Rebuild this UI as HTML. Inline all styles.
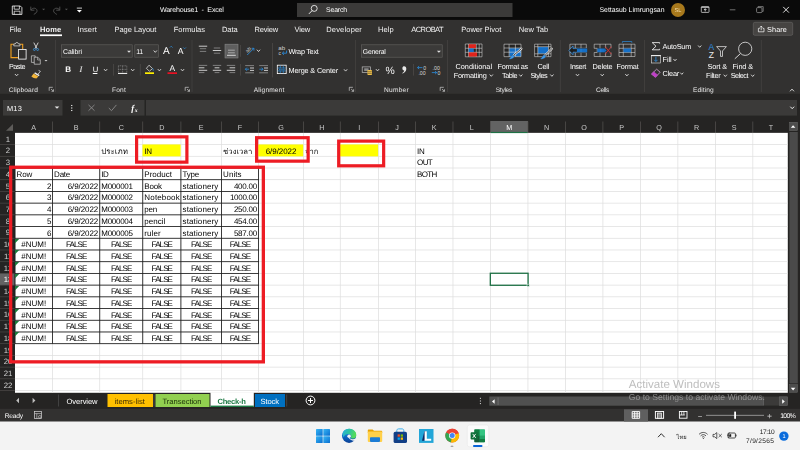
<!DOCTYPE html>
<html lang="th"><head><meta charset="utf-8"><title>Warehouse1 - Excel</title>
<style>
html,body{margin:0;padding:0;}
body{width:800px;height:450px;overflow:hidden;position:relative;background:#f3f3f3;font-family:"Liberation Sans", "DejaVu Sans", sans-serif;}
.b{position:absolute;display:block;}
.g{position:absolute;left:0;top:0;width:800px;height:450px;will-change:transform;}
.t{position:absolute;white-space:pre;line-height:1;margin:0;padding:0;text-rendering:geometricPrecision;}
</style></head><body>
<svg class="b" style="left:0;top:0" width="800" height="450" viewBox="0 0 800 450">
<rect x="0.00" y="0.00" width="800.00" height="432.00" fill="#252423"/>
<rect x="0.00" y="0.00" width="800.00" height="93.80" fill="#323130"/>
<rect x="0.00" y="0.00" width="800.00" height="19.90" fill="#0a0a0a"/>
<rect x="15.00" y="132.85" width="772.80" height="259.95" fill="#ffffff"/>
<rect x="0.00" y="408.80" width="800.00" height="23.20" fill="#323130"/>
<rect x="0.00" y="421.50" width="800.00" height="28.50" fill="#f3f3f3"/>
<rect x="297.00" y="3.00" width="215.50" height="14.00" fill="#3b3a39"/>
<rect x="671.00" y="3.00" width="14.00" height="14.00" fill="#a8791c" rx="7"/>
<rect x="40.00" y="34.40" width="22.00" height="1.70" fill="#ffffff"/>
<rect x="753.30" y="22.30" width="39.40" height="13.00" fill="#464442" stroke="#6a6866" stroke-width="0.6" rx="1.5"/>
<rect x="55.20" y="40.00" width="0.60" height="52.00" fill="#4a4846"/>
<rect x="191.70" y="40.00" width="0.60" height="52.00" fill="#4a4846"/>
<rect x="355.30" y="40.00" width="0.60" height="52.00" fill="#4a4846"/>
<rect x="447.20" y="40.00" width="0.60" height="52.00" fill="#4a4846"/>
<rect x="559.90" y="40.00" width="0.60" height="52.00" fill="#4a4846"/>
<rect x="644.10" y="40.00" width="0.60" height="52.00" fill="#4a4846"/>
<rect x="760.90" y="40.00" width="0.60" height="52.00" fill="#4a4846"/>
<rect x="113.30" y="64.00" width="0.60" height="11.60" fill="#55524f"/>
<rect x="139.90" y="64.00" width="0.60" height="11.60" fill="#55524f"/>
<rect x="240.30" y="64.00" width="0.60" height="11.60" fill="#55524f"/>
<rect x="413.20" y="64.00" width="0.60" height="11.60" fill="#55524f"/>
<rect x="240.30" y="45.00" width="0.60" height="11.80" fill="#55524f"/>
<rect x="272.00" y="43.00" width="0.60" height="34.40" fill="#55524f"/>
<rect x="61.30" y="44.80" width="70.90" height="12.40" fill="#3b3a39" stroke="#656361" stroke-width="0.6"/>
<rect x="134.80" y="44.80" width="23.70" height="12.40" fill="#3b3a39" stroke="#656361" stroke-width="0.6"/>
<rect x="145.00" y="72.30" width="9.00" height="1.70" fill="#ffee00"/>
<rect x="167.50" y="72.30" width="9.50" height="1.70" fill="#e81123"/>
<rect x="225.00" y="44.50" width="13.00" height="13.50" fill="#5e5e5e"/>
<rect x="361.30" y="44.80" width="80.90" height="12.40" fill="#3b3a39" stroke="#656361" stroke-width="0.6"/>
<rect x="3.00" y="100.00" width="59.50" height="15.60" fill="#3b3a39"/>
<rect x="80.50" y="100.00" width="64.00" height="15.60" fill="#3b3a39"/>
<rect x="146.00" y="100.00" width="651.00" height="15.60" fill="#3b3a39"/>
<rect x="490.30" y="121.00" width="37.70" height="11.40" fill="#636363"/>
<rect x="490.30" y="131.90" width="37.70" height="1.20" fill="#1e7145"/>
<rect x="0.00" y="273.41" width="14.60" height="11.71" fill="#636363"/>
<rect x="52.15" y="121.50" width="0.70" height="11.35" fill="#565452"/>
<rect x="99.40" y="121.50" width="0.70" height="11.35" fill="#565452"/>
<rect x="142.40" y="121.50" width="0.70" height="11.35" fill="#565452"/>
<rect x="180.55" y="121.50" width="0.70" height="11.35" fill="#565452"/>
<rect x="221.15" y="121.50" width="0.70" height="11.35" fill="#565452"/>
<rect x="258.15" y="121.50" width="0.70" height="11.35" fill="#565452"/>
<rect x="303.15" y="121.50" width="0.70" height="11.35" fill="#565452"/>
<rect x="339.90" y="121.50" width="0.70" height="11.35" fill="#565452"/>
<rect x="378.05" y="121.50" width="0.70" height="11.35" fill="#565452"/>
<rect x="415.15" y="121.50" width="0.70" height="11.35" fill="#565452"/>
<rect x="452.63" y="121.50" width="0.70" height="11.35" fill="#565452"/>
<rect x="490.11" y="121.50" width="0.70" height="11.35" fill="#565452"/>
<rect x="527.60" y="121.50" width="0.70" height="11.35" fill="#565452"/>
<rect x="565.08" y="121.50" width="0.70" height="11.35" fill="#565452"/>
<rect x="602.56" y="121.50" width="0.70" height="11.35" fill="#565452"/>
<rect x="640.04" y="121.50" width="0.70" height="11.35" fill="#565452"/>
<rect x="677.52" y="121.50" width="0.70" height="11.35" fill="#565452"/>
<rect x="715.00" y="121.50" width="0.70" height="11.35" fill="#565452"/>
<rect x="752.49" y="121.50" width="0.70" height="11.35" fill="#565452"/>
<rect x="52.14" y="132.85" width="0.72" height="259.95" fill="#dedede"/>
<rect x="99.39" y="132.85" width="0.72" height="259.95" fill="#dedede"/>
<rect x="142.39" y="132.85" width="0.72" height="259.95" fill="#dedede"/>
<rect x="180.54" y="132.85" width="0.72" height="259.95" fill="#dedede"/>
<rect x="221.14" y="132.85" width="0.72" height="259.95" fill="#dedede"/>
<rect x="258.14" y="132.85" width="0.72" height="259.95" fill="#dedede"/>
<rect x="303.14" y="132.85" width="0.72" height="259.95" fill="#dedede"/>
<rect x="339.89" y="132.85" width="0.72" height="259.95" fill="#dedede"/>
<rect x="378.04" y="132.85" width="0.72" height="259.95" fill="#dedede"/>
<rect x="415.14" y="132.85" width="0.72" height="259.95" fill="#dedede"/>
<rect x="452.62" y="132.85" width="0.72" height="259.95" fill="#dedede"/>
<rect x="490.10" y="132.85" width="0.72" height="259.95" fill="#dedede"/>
<rect x="527.59" y="132.85" width="0.72" height="259.95" fill="#dedede"/>
<rect x="565.07" y="132.85" width="0.72" height="259.95" fill="#dedede"/>
<rect x="602.55" y="132.85" width="0.72" height="259.95" fill="#dedede"/>
<rect x="640.03" y="132.85" width="0.72" height="259.95" fill="#dedede"/>
<rect x="677.51" y="132.85" width="0.72" height="259.95" fill="#dedede"/>
<rect x="714.99" y="132.85" width="0.72" height="259.95" fill="#dedede"/>
<rect x="752.48" y="132.85" width="0.72" height="259.95" fill="#dedede"/>
<rect x="15.00" y="144.20" width="772.80" height="0.72" fill="#dedede"/>
<rect x="0.00" y="144.21" width="15.00" height="0.70" fill="#4c4a48"/>
<rect x="15.00" y="155.92" width="772.80" height="0.72" fill="#dedede"/>
<rect x="0.00" y="155.93" width="15.00" height="0.70" fill="#4c4a48"/>
<rect x="15.00" y="167.63" width="772.80" height="0.72" fill="#dedede"/>
<rect x="0.00" y="167.64" width="15.00" height="0.70" fill="#4c4a48"/>
<rect x="15.00" y="179.34" width="772.80" height="0.72" fill="#dedede"/>
<rect x="0.00" y="179.35" width="15.00" height="0.70" fill="#4c4a48"/>
<rect x="15.00" y="191.06" width="772.80" height="0.72" fill="#dedede"/>
<rect x="0.00" y="191.07" width="15.00" height="0.70" fill="#4c4a48"/>
<rect x="15.00" y="202.77" width="772.80" height="0.72" fill="#dedede"/>
<rect x="0.00" y="202.78" width="15.00" height="0.70" fill="#4c4a48"/>
<rect x="15.00" y="214.48" width="772.80" height="0.72" fill="#dedede"/>
<rect x="0.00" y="214.49" width="15.00" height="0.70" fill="#4c4a48"/>
<rect x="15.00" y="226.19" width="772.80" height="0.72" fill="#dedede"/>
<rect x="0.00" y="226.20" width="15.00" height="0.70" fill="#4c4a48"/>
<rect x="15.00" y="237.91" width="772.80" height="0.72" fill="#dedede"/>
<rect x="0.00" y="237.92" width="15.00" height="0.70" fill="#4c4a48"/>
<rect x="15.00" y="249.62" width="772.80" height="0.72" fill="#dedede"/>
<rect x="0.00" y="249.63" width="15.00" height="0.70" fill="#4c4a48"/>
<rect x="15.00" y="261.33" width="772.80" height="0.72" fill="#dedede"/>
<rect x="0.00" y="261.34" width="15.00" height="0.70" fill="#4c4a48"/>
<rect x="15.00" y="273.05" width="772.80" height="0.72" fill="#dedede"/>
<rect x="0.00" y="273.06" width="15.00" height="0.70" fill="#4c4a48"/>
<rect x="15.00" y="284.76" width="772.80" height="0.72" fill="#dedede"/>
<rect x="0.00" y="284.77" width="15.00" height="0.70" fill="#4c4a48"/>
<rect x="15.00" y="296.47" width="772.80" height="0.72" fill="#dedede"/>
<rect x="0.00" y="296.48" width="15.00" height="0.70" fill="#4c4a48"/>
<rect x="15.00" y="308.19" width="772.80" height="0.72" fill="#dedede"/>
<rect x="0.00" y="308.20" width="15.00" height="0.70" fill="#4c4a48"/>
<rect x="15.00" y="319.90" width="772.80" height="0.72" fill="#dedede"/>
<rect x="0.00" y="319.91" width="15.00" height="0.70" fill="#4c4a48"/>
<rect x="15.00" y="331.61" width="772.80" height="0.72" fill="#dedede"/>
<rect x="0.00" y="331.62" width="15.00" height="0.70" fill="#4c4a48"/>
<rect x="15.00" y="343.32" width="772.80" height="0.72" fill="#dedede"/>
<rect x="0.00" y="343.33" width="15.00" height="0.70" fill="#4c4a48"/>
<rect x="15.00" y="355.04" width="772.80" height="0.72" fill="#dedede"/>
<rect x="0.00" y="355.05" width="15.00" height="0.70" fill="#4c4a48"/>
<rect x="15.00" y="366.75" width="772.80" height="0.72" fill="#dedede"/>
<rect x="0.00" y="366.76" width="15.00" height="0.70" fill="#4c4a48"/>
<rect x="15.00" y="378.46" width="772.80" height="0.72" fill="#dedede"/>
<rect x="0.00" y="378.47" width="15.00" height="0.70" fill="#4c4a48"/>
<rect x="15.00" y="390.18" width="772.80" height="0.72" fill="#dedede"/>
<rect x="0.00" y="390.19" width="15.00" height="0.70" fill="#4c4a48"/>
<rect x="142.45" y="144.46" width="38.15" height="11.91" fill="#ffff00"/>
<rect x="258.20" y="144.46" width="45.00" height="11.91" fill="#ffff00"/>
<rect x="339.95" y="144.46" width="38.15" height="11.91" fill="#ffff00"/>
<rect x="15.00" y="167.57" width="243.90" height="0.84" fill="#1c1c1c"/>
<rect x="15.00" y="179.28" width="243.90" height="0.84" fill="#1c1c1c"/>
<rect x="15.00" y="191.00" width="243.90" height="0.84" fill="#1c1c1c"/>
<rect x="15.00" y="202.71" width="243.90" height="0.84" fill="#1c1c1c"/>
<rect x="15.00" y="214.42" width="243.90" height="0.84" fill="#1c1c1c"/>
<rect x="15.00" y="226.13" width="243.90" height="0.84" fill="#1c1c1c"/>
<rect x="15.00" y="237.85" width="243.90" height="0.84" fill="#1c1c1c"/>
<rect x="15.00" y="249.56" width="243.90" height="0.84" fill="#1c1c1c"/>
<rect x="15.00" y="261.27" width="243.90" height="0.84" fill="#1c1c1c"/>
<rect x="15.00" y="272.99" width="243.90" height="0.84" fill="#1c1c1c"/>
<rect x="15.00" y="284.70" width="243.90" height="0.84" fill="#1c1c1c"/>
<rect x="15.00" y="296.41" width="243.90" height="0.84" fill="#1c1c1c"/>
<rect x="15.00" y="308.13" width="243.90" height="0.84" fill="#1c1c1c"/>
<rect x="15.00" y="319.84" width="243.90" height="0.84" fill="#1c1c1c"/>
<rect x="15.00" y="331.55" width="243.90" height="0.84" fill="#1c1c1c"/>
<rect x="15.00" y="343.26" width="243.90" height="0.84" fill="#1c1c1c"/>
<rect x="52.08" y="167.99" width="0.84" height="175.70" fill="#1c1c1c"/>
<rect x="99.33" y="167.99" width="0.84" height="175.70" fill="#1c1c1c"/>
<rect x="142.33" y="167.99" width="0.84" height="175.70" fill="#1c1c1c"/>
<rect x="180.48" y="167.99" width="0.84" height="175.70" fill="#1c1c1c"/>
<rect x="221.08" y="167.99" width="0.84" height="175.70" fill="#1c1c1c"/>
<rect x="258.08" y="167.99" width="0.84" height="175.70" fill="#1c1c1c"/>
<rect x="14.70" y="167.99" width="0.80" height="175.70" fill="#1c1c1c"/>
<rect x="490.31" y="273.26" width="37.78" height="12.01" fill="none" stroke="#1d7044" stroke-width="1.3"/>
<rect x="527.00" y="284.17" width="2.30" height="2.30" fill="#1d7044" stroke="#fff" stroke-width="0.5"/>
<rect x="789.65" y="122.25" width="7.90" height="8.30" fill="#4d4d4d" stroke="#686868" stroke-width="0.5"/>
<rect x="789.40" y="132.00" width="8.40" height="251.40" fill="#4a4a4a"/>
<rect x="789.65" y="384.65" width="7.90" height="7.60" fill="#4d4d4d" stroke="#686868" stroke-width="0.5"/>
<rect x="58.00" y="394.50" width="0.60" height="12.00" fill="#555"/>
<rect x="107.50" y="394.00" width="45.50" height="13.00" fill="#ffc000"/>
<rect x="155.50" y="394.00" width="54.00" height="13.00" fill="#92d050"/>
<rect x="210.50" y="392.20" width="43.30" height="14.80" fill="#ffffff"/>
<rect x="210.50" y="405.60" width="43.30" height="1.40" fill="#1e7a45"/>
<rect x="255.00" y="394.00" width="30.00" height="13.00" fill="#0070c0"/>
<rect x="153.60" y="394.50" width="0.80" height="12.00" fill="#555"/>
<rect x="286.50" y="394.50" width="0.60" height="12.00" fill="#555"/>
<rect x="479.90" y="397.80" width="1.00" height="1.00" fill="#e8e8e8"/>
<rect x="479.90" y="400.50" width="1.00" height="1.00" fill="#e8e8e8"/>
<rect x="479.90" y="403.10" width="1.00" height="1.00" fill="#e8e8e8"/>
<rect x="489.40" y="396.60" width="298.40" height="9.00" fill="#3b3a39"/>
<rect x="489.40" y="396.60" width="274.60" height="9.00" fill="#505050"/>
<rect x="497.70" y="397.40" width="0.70" height="7.60" fill="#7c7c7c"/>
<rect x="763.40" y="397.20" width="0.60" height="8.00" fill="#666"/>
<rect x="779.45" y="396.85" width="8.10" height="8.50" fill="#505050" stroke="#6a6a6a" stroke-width="0.5"/>
<rect x="624.00" y="409.30" width="24.00" height="12.20" fill="#5f5f5f"/>
<rect x="706.00" y="414.90" width="58.00" height="0.60" fill="#d0d0d0"/>
<rect x="734.20" y="411.60" width="1.80" height="7.20" fill="#ffffff"/>
<rect x="467.25" y="425.05" width="21.50" height="21.70" fill="#fbfbfb" stroke="#e4e4e4" stroke-width="0.5" rx="2"/>
<rect x="473.00" y="445.00" width="9.50" height="1.90" fill="#0a64d8" rx="0.9"/>
<rect x="450.60" y="445.80" width="2.80" height="1.00" fill="#8a8a8a" rx="0.5"/>
<rect x="779.20" y="431.40" width="9.40" height="9.40" fill="#0a6cdc" rx="4.7"/>
</svg>
<svg class="b" style="left:3px;top:122px" width="12" height="10" viewBox="0 0 12 10"><path d="M10 2V8.8H3Z" fill="#5e5c5a"/></svg>
<svg class="b" style="left:15.30px;top:238.67px" width="5" height="5" viewBox="0 0 5 5"><path d="M0 0H4.2L0 4.2Z" fill="#1e7a3c"/></svg>
<svg class="b" style="left:15.30px;top:250.38px" width="5" height="5" viewBox="0 0 5 5"><path d="M0 0H4.2L0 4.2Z" fill="#1e7a3c"/></svg>
<svg class="b" style="left:15.30px;top:262.09px" width="5" height="5" viewBox="0 0 5 5"><path d="M0 0H4.2L0 4.2Z" fill="#1e7a3c"/></svg>
<svg class="b" style="left:15.30px;top:273.81px" width="5" height="5" viewBox="0 0 5 5"><path d="M0 0H4.2L0 4.2Z" fill="#1e7a3c"/></svg>
<svg class="b" style="left:15.30px;top:285.52px" width="5" height="5" viewBox="0 0 5 5"><path d="M0 0H4.2L0 4.2Z" fill="#1e7a3c"/></svg>
<svg class="b" style="left:15.30px;top:297.23px" width="5" height="5" viewBox="0 0 5 5"><path d="M0 0H4.2L0 4.2Z" fill="#1e7a3c"/></svg>
<svg class="b" style="left:15.30px;top:308.95px" width="5" height="5" viewBox="0 0 5 5"><path d="M0 0H4.2L0 4.2Z" fill="#1e7a3c"/></svg>
<svg class="b" style="left:15.30px;top:320.66px" width="5" height="5" viewBox="0 0 5 5"><path d="M0 0H4.2L0 4.2Z" fill="#1e7a3c"/></svg>
<svg class="b" style="left:15.30px;top:332.37px" width="5" height="5" viewBox="0 0 5 5"><path d="M0 0H4.2L0 4.2Z" fill="#1e7a3c"/></svg>
<svg class="b" style="left:789.4px;top:122px" width="8.2" height="8.8" viewBox="0 0 8.2 8.8"><path d="M1.8 5.8L4.1 3.2L6.4 5.8Z" fill="#fff"/></svg>
<svg class="b" style="left:789.4px;top:384.5px" width="8.2" height="8" viewBox="0 0 8.2 8"><path d="M1.8 2.8L4.1 5.4L6.4 2.8Z" fill="#fff"/></svg>
<svg class="b" style="left:304.9px;top:395.2px" width="11" height="11" viewBox="0 0 11 11"><circle cx="5.5" cy="5.5" r="4.4" fill="none" stroke="#fff" stroke-width="1"/><path d="M5.5 3V8M3 5.5H8" stroke="#fff" stroke-width="1.05"/></svg>
<svg class="b" style="left:14px;top:397px" width="24" height="7" viewBox="0 0 24 7"><path d="M5 0.8V6.2L2.2 3.5Z M18.6 0.8V6.2L21.4 3.5Z" fill="#bdbdbd"/></svg>
<svg class="b" style="left:489.4px;top:396.6px" width="8.6" height="9" viewBox="0 0 8.6 9"><path d="M5.6 2.2V6.8L3 4.5Z" fill="#fff"/></svg>
<svg class="b" style="left:779.2px;top:396.6px" width="8.6" height="9" viewBox="0 0 8.6 9"><path d="M3.2 2.2V6.8L5.8 4.5Z" fill="#fff"/></svg>
<svg class="b" style="left:0;top:0" width="800" height="450" viewBox="0 0 800 450"><path d="M12.3 6H20.3L21.9 7.6V14.4H12.3Z" fill="none" stroke="#ffffff" stroke-width="0.8" /><path d="M14.2 6V9.2H19.4V6" fill="none" stroke="#ffffff" stroke-width="0.7" /><path d="M14.2 14.4V11.2H20V14.4" fill="none" stroke="#ffffff" stroke-width="0.7" /><path d="M30.8 6.6V10.2H34.4M30.9 10.1C32.5 7.4 36.6 7.6 37 10.6C37.2 12.4 35.5 13.4 33.8 14.4" fill="none" stroke="#555555" stroke-width="0.9" /><path d="M42.10 8.75H45.10L43.60 10.25Z" fill="#555555" /><path d="M59.8 6.6V10.2H56.2M59.7 10.1C58.1 7.4 54 7.6 53.6 10.6C53.4 12.4 55.1 13.4 56.8 14.4" fill="none" stroke="#555555" stroke-width="0.9" /><path d="M64.90 8.75H67.90L66.40 10.25Z" fill="#555555" /><path d="M76.8 8.1H82" fill="none" stroke="#ffffff" stroke-width="0.8" /><path d="M76.9 10H81.9L79.4 12.4Z" fill="#ffffff" /><circle cx="314.20" cy="8.40" r="3.00" fill="none" stroke="#ffffff" stroke-width="0.8"/><path d="M312.1 10.6L308.9 13.9" fill="none" stroke="#ffffff" stroke-width="0.9" /><rect x="701.30" y="6.60" width="7.70" height="5.80" fill="none" stroke="#dcdcdc" stroke-width="0.75" rx="0.6"/><path d="M701.3 7.4H709" fill="none" stroke="#dcdcdc" stroke-width="0.8" /><path d="M705.2 11.4V8.8M703.9 10L705.2 8.7L706.5 10" fill="none" stroke="#ffffff" stroke-width="0.75" /><path d="M729.8 9.8H735.4" fill="none" stroke="#8a8a8a" stroke-width="0.8" /><rect x="756.60" y="7.60" width="5.40" height="5.00" fill="none" stroke="#9a9a9a" stroke-width="0.75" rx="1"/><path d="M758 7.4V6.6H763.2V11.4H762.2" fill="none" stroke="#9a9a9a" stroke-width="0.7" /><path d="M783.2 6.9L788.9 12.6M788.9 6.9L783.2 12.6" fill="none" stroke="#ffffff" stroke-width="0.85" /><path d="M759.8 28.4H758.4V31.8H764V28.4H762.8" fill="none" stroke="#ffffff" stroke-width="0.7" /><path d="M761.2 30.2V26.2M759.9 27.5L761.2 26.1L762.5 27.5" fill="none" stroke="#ffffff" stroke-width="0.7" /><path d="M13.6 44.2H11V57.6H18.4" fill="none" stroke="#f0a020" stroke-width="1.1" /><path d="M20.2 44.2H22.7V49" fill="none" stroke="#f0a020" stroke-width="1.1" /><path d="M13.8 45.9V43.9H15.3C15.5 42 18.3 42 18.5 43.9H20V45.9Z" fill="none" stroke="#e8e8e8" stroke-width="0.7" /><rect x="18.60" y="49.40" width="7.50" height="9.70" fill="#323130" stroke="#ffffff" stroke-width="0.8"/><path d="M14.90 74.00L16.60 75.80L18.30 74.00" fill="none" stroke="#e0e0e0" stroke-width="0.9" /><path d="M33.8 42.6L36.9 48.6M38.2 42.6L35.1 48.6" fill="none" stroke="#ffffff" stroke-width="0.75" /><circle cx="34.40" cy="49.50" r="1.00" fill="none" stroke="#3a96e0" stroke-width="0.8"/><circle cx="37.60" cy="49.50" r="1.00" fill="none" stroke="#3a96e0" stroke-width="0.8"/><path d="M31.4 55.8H35.2V62.4H31.4Z" fill="none" stroke="#d0d0d0" stroke-width="0.7" /><path d="M34.2 57.2H37.8L40.3 59.8V64.2H34.2Z" fill="#323130" stroke="#d0d0d0" stroke-width="0.7" /><path d="M37.6 57.4V60H40.1" fill="none" stroke="#d0d0d0" stroke-width="0.6" /><path d="M44.50 60.10H47.50L46.00 61.50Z" fill="#d0d0d0" /><path d="M38.6 70.4L40.4 71.3L38 74.2" fill="none" stroke="#d8d8d8" stroke-width="0.8" /><path d="M35 72.2L39.6 75L38.8 76.2L34.2 73.4Z" fill="#e8e8e8" /><path d="M33.6 73.6L38.4 76.6L36.4 78.4C34.6 78.2 32.6 77.6 31.4 76.4Z" fill="#f2b53a" /><path d="M49.20 90.80V87.30H52.80" fill="none" stroke="#cfcfcf" stroke-width="0.7" /><path d="M51.00 89.00L53.40 91.20M53.50 89.30V91.30H51.50" fill="none" stroke="#cfcfcf" stroke-width="0.7" /><path d="M127.10 50.75H130.90L129.00 52.65Z" fill="#e0e0e0" /><path d="M153.70 50.50L155.30 52.30L156.90 50.50" fill="none" stroke="#e0e0e0" stroke-width="0.9" /><path d="M169.8 47.6L171.2 46.2L172.6 47.6" fill="none" stroke="#2b8fe0" stroke-width="0.7" /><path d="M183.2 47.4L184.6 48.8L186 47.4" fill="none" stroke="#2b8fe0" stroke-width="0.7" /><path d="M104.00 69.10L105.60 70.90L107.20 69.10" fill="none" stroke="#e0e0e0" stroke-width="0.9" /><path d="M118.4 65.8H126.8M118.4 69.4H126.8M118.4 65.8V73M126.8 65.8V73M122.6 65.8V73" fill="none" stroke="#9a9a9a" stroke-width="0.6" stroke-dasharray="1 0.7"/><path d="M118 73.4H127.2" fill="none" stroke="#ffffff" stroke-width="1" /><path d="M131.10 69.10L132.70 70.90L134.30 69.10" fill="none" stroke="#e0e0e0" stroke-width="0.9" /><path d="M149 65.2L152.6 68.6L149.4 71.2L146.4 68.4Z" fill="none" stroke="#e0e0e0" stroke-width="0.75" /><path d="M152.6 68.4C153.6 69.6 153.6 70.4 152.9 70.9" fill="none" stroke="#2b8fe0" stroke-width="0.8" /><path d="M157.80 69.10L159.40 70.90L161.00 69.10" fill="none" stroke="#e0e0e0" stroke-width="0.9" /><path d="M180.90 69.10L182.50 70.90L184.10 69.10" fill="none" stroke="#e0e0e0" stroke-width="0.9" /><path d="M185.20 90.80V87.30H188.80" fill="none" stroke="#cfcfcf" stroke-width="0.7" /><path d="M187.00 89.00L189.40 91.20M189.50 89.30V91.30H187.50" fill="none" stroke="#cfcfcf" stroke-width="0.7" /><path d="M198.80 46.20H207.20" fill="none" stroke="#ffffff" stroke-width="0.75" /><path d="M199.80 48.70H206.20" fill="none" stroke="#9a9a9a" stroke-width="0.75" /><path d="M199.80 51.40H206.20" fill="none" stroke="#9a9a9a" stroke-width="0.75" /><path d="M213.80 48.00H220.20" fill="none" stroke="#9a9a9a" stroke-width="0.75" /><path d="M212.80 50.50H221.20" fill="none" stroke="#ffffff" stroke-width="0.75" /><path d="M213.80 53.20H220.20" fill="none" stroke="#9a9a9a" stroke-width="0.75" /><rect x="225.00" y="44.20" width="13.00" height="13.80" fill="#5e5e5e" stroke="#858585" stroke-width="0.6"/><path d="M228.00 50.20H234.80" fill="none" stroke="#c0c0c0" stroke-width="0.75" /><path d="M228.00 52.80H234.80" fill="none" stroke="#c0c0c0" stroke-width="0.75" /><path d="M227.00 55.30H235.80" fill="none" stroke="#ffffff" stroke-width="0.75" /><text x="246.2" y="52" font-size="5.2" fill="#cfcfcf" font-family="Liberation Sans, sans-serif" transform="rotate(-45 248 51)">ab</text><path d="M247.2 55L253.8 48.4M253.9 50.6V48.3H251.6" fill="none" stroke="#2b8fe0" stroke-width="0.85" /><path d="M256.90 49.70L258.50 51.50L260.10 49.70" fill="none" stroke="#e0e0e0" stroke-width="0.9" /><path d="M198.80 65.40H207.20" fill="none" stroke="#9a9a9a" stroke-width="0.75" /><path d="M198.80 67.80H204.40" fill="none" stroke="#ffffff" stroke-width="0.75" /><path d="M198.80 70.30H207.20" fill="none" stroke="#ffffff" stroke-width="0.75" /><path d="M198.80 72.60H204.40" fill="none" stroke="#9a9a9a" stroke-width="0.75" /><path d="M212.80 65.40H221.20" fill="none" stroke="#9a9a9a" stroke-width="0.75" /><path d="M214.60 67.80H219.40" fill="none" stroke="#ffffff" stroke-width="0.75" /><path d="M212.80 70.30H221.20" fill="none" stroke="#ffffff" stroke-width="0.75" /><path d="M214.60 72.60H219.40" fill="none" stroke="#9a9a9a" stroke-width="0.75" /><path d="M226.80 65.40H235.20" fill="none" stroke="#9a9a9a" stroke-width="0.75" /><path d="M229.60 67.80H235.20" fill="none" stroke="#ffffff" stroke-width="0.75" /><path d="M226.80 70.30H235.20" fill="none" stroke="#ffffff" stroke-width="0.75" /><path d="M229.60 72.60H235.20" fill="none" stroke="#9a9a9a" stroke-width="0.75" /><path d="M245.20 65.60H254.00" fill="none" stroke="#9a9a9a" stroke-width="0.75" /><path d="M245.20 72.80H254.00" fill="none" stroke="#9a9a9a" stroke-width="0.75" /><path d="M250.00 68.00H254.00" fill="none" stroke="#ffffff" stroke-width="0.75" /><path d="M250.00 70.40H254.00" fill="none" stroke="#ffffff" stroke-width="0.75" /><path d="M249 69.2H245.4M246.9 67.6L245.3 69.2L246.9 70.8" fill="none" stroke="#2b8fe0" stroke-width="0.8" /><path d="M259.20 65.60H268.00" fill="none" stroke="#9a9a9a" stroke-width="0.75" /><path d="M259.20 72.80H268.00" fill="none" stroke="#9a9a9a" stroke-width="0.75" /><path d="M264.00 68.00H268.00" fill="none" stroke="#ffffff" stroke-width="0.75" /><path d="M264.00 70.40H268.00" fill="none" stroke="#ffffff" stroke-width="0.75" /><path d="M259.4 69.2H263M261.5 67.6L263.1 69.2L261.5 70.8" fill="none" stroke="#2b8fe0" stroke-width="0.8" /><text x="278.2" y="50.4" font-size="6.2" fill="#d0d0d0" font-family="Liberation Sans, sans-serif">ab</text><text x="278.4" y="55.4" font-size="5" fill="#d0d0d0" font-family="Liberation Sans, sans-serif">c</text><path d="M286.6 50.6V53.2H282.4M284 51.6L282.3 53.2L284 54.8" fill="none" stroke="#2b8fe0" stroke-width="0.85" /><rect x="277.30" y="65.20" width="8.90" height="8.40" fill="none" stroke="#ffffff" stroke-width="0.8"/><path d="M277.7 68H285.8M277.7 70.9H285.8M280.3 65.6V68M283.3 65.6V68M280.3 70.9V73.2M283.3 70.9V73.2" fill="none" stroke="#2b8fe0" stroke-width="0.7" /><path d="M279.2 69.45H284.4M280.2 68.6L279.2 69.45L280.2 70.3M283.4 68.6L284.4 69.45L283.4 70.3" fill="none" stroke="#2b8fe0" stroke-width="0.55" /><path d="M344.00 69.30L345.60 71.10L347.20 69.30" fill="none" stroke="#e0e0e0" stroke-width="0.9" /><path d="M349.30 90.80V87.30H352.90" fill="none" stroke="#cfcfcf" stroke-width="0.7" /><path d="M351.10 89.00L353.50 91.20M353.60 89.30V91.30H351.60" fill="none" stroke="#cfcfcf" stroke-width="0.7" /><path d="M436.90 50.80H440.90L438.90 52.80Z" fill="#e0e0e0" /><rect x="362.20" y="66.90" width="8.40" height="5.50" fill="none" stroke="#bdbdbd" stroke-width="0.7"/><rect x="364.20" y="68.30" width="4.40" height="2.70" fill="#8a8a8a"/><rect x="367.40" y="70.00" width="4.60" height="5.00" fill="#f2c246" rx="0.8"/><path d="M367.6 71.7H371.8M367.6 73.4H371.8" fill="none" stroke="#323130" stroke-width="0.5" /><path d="M375.90 69.10L377.50 70.90L379.10 69.10" fill="none" stroke="#e0e0e0" stroke-width="0.9" /><text x="423.2" y="69.6" font-size="5.2" fill="#d8d8d8" text-anchor="start" font-family="Liberation Sans, sans-serif" >0</text><text x="418.4" y="74.6" font-size="5.2" fill="#d8d8d8" text-anchor="start" font-family="Liberation Sans, sans-serif" >.00</text><path d="M422.4 67.6H417.6M419.1 66.1L417.5 67.6L419.1 69.1" fill="none" stroke="#2b8fe0" stroke-width="0.8" /><text x="432.6" y="69.6" font-size="5.2" fill="#d8d8d8" text-anchor="start" font-family="Liberation Sans, sans-serif" >.00</text><text x="437.6" y="74.6" font-size="5.2" fill="#d8d8d8" text-anchor="start" font-family="Liberation Sans, sans-serif" >0</text><path d="M431.8 72.6H436.6M435.1 71.1L436.7 72.6L435.1 74.1" fill="none" stroke="#2b8fe0" stroke-width="0.8" /><path d="M403.2 66.4C405.4 65.8 406.8 67.6 406.2 69.8C405.8 71.6 404.4 73 402.4 73.6L402.2 72.9C403.6 72.2 404.2 71.4 404.2 70.4C402.4 70.6 401.8 67.2 403.2 66.4Z" fill="#e8e8e8" /><path d="M440.20 90.80V87.30H443.80" fill="none" stroke="#cfcfcf" stroke-width="0.7" /><path d="M442.00 89.00L444.40 91.20M444.50 89.30V91.30H442.50" fill="none" stroke="#cfcfcf" stroke-width="0.7" /><rect x="465.30" y="44.00" width="16.70" height="12.80" fill="#262524"/><rect x="468.70" y="44.30" width="7.30" height="3.90" fill="#e0241c"/><rect x="468.70" y="48.50" width="4.90" height="3.60" fill="#1570c8"/><rect x="468.70" y="52.40" width="8.40" height="4.10" fill="#e0241c"/><path d="M465.3 44H482V56.8H465.3ZM465.3 48.25H482M465.3 52.3H482M468.5 44V56.8M476.3 44V56.8M479.2 44V56.8" fill="none" stroke="#dcdcdc" stroke-width="0.55" /><rect x="468.80" y="44.50" width="7.10" height="3.50" fill="#e0241c"/><rect x="468.80" y="48.70" width="4.70" height="3.30" fill="#1570c8"/><rect x="468.80" y="52.60" width="8.20" height="3.80" fill="#e0241c"/><rect x="504.00" y="44.20" width="17.00" height="12.45" fill="#262524"/><rect x="509.30" y="48.20" width="11.70" height="8.30" fill="#1570c8"/><path d="M504 44.2H521V56.65H504ZM504 48H521M504 52.2H521M509.1 44.2V56.65M515.4 44.2V56.65" fill="none" stroke="#e0e0e0" stroke-width="0.55" /><path d="M521.4 48.7L513.8 55.2" fill="none" stroke="#e8e8e8" stroke-width="2.1" stroke-linecap="round"/><path d="M521.4 48.7L513.8 55.2" fill="none" stroke="#323130" stroke-width="0.9" stroke-linecap="round"/><path d="M514.70 55.70C514.40 58.20 511.40 59.60 508.60 59.10C510.40 58.20 510.60 56.40 512.20 54.80Z" fill="#3c9aec" stroke="#323130" stroke-width="0.35" /><rect x="534.60" y="44.20" width="16.40" height="12.45" fill="#262524"/><rect x="537.90" y="47.00" width="10.40" height="6.60" fill="#1570c8"/><path d="M534.6 44.2H551V56.65H534.6ZM534.6 46.7H551M534.6 53.8H551M537.8 44.2V56.65M548.5 44.2V56.65" fill="none" stroke="#e0e0e0" stroke-width="0.55" /><path d="M551.8 48.7L545.2 55.2" fill="none" stroke="#e8e8e8" stroke-width="2.1" stroke-linecap="round"/><path d="M551.8 48.7L545.2 55.2" fill="none" stroke="#323130" stroke-width="0.9" stroke-linecap="round"/><path d="M546.10 55.70C545.80 58.20 542.80 59.60 540.00 59.10C541.80 58.20 542.00 56.40 543.60 54.80Z" fill="#3c9aec" stroke="#323130" stroke-width="0.35" /><path d="M489.70 74.50L491.30 76.30L492.90 74.50" fill="none" stroke="#e0e0e0" stroke-width="0.9" /><path d="M519.20 74.50L520.80 76.30L522.40 74.50" fill="none" stroke="#e0e0e0" stroke-width="0.9" /><path d="M550.30 74.50L551.90 76.30L553.50 74.50" fill="none" stroke="#e0e0e0" stroke-width="0.9" /><path d="M569.9 44.2H586.3V56.5H569.9ZM569.9 48.3H586.3M569.9 52.5H586.3M575.3 44.2V56.5M581 44.2V56.5" fill="none" stroke="#dcdcdc" stroke-width="0.55" /><rect x="571.60" y="48.10" width="15.60" height="4.60" fill="#323130"/><rect x="576.60" y="48.50" width="10.60" height="3.80" fill="#1570c8"/><path d="M581 48.5V52.3" fill="none" stroke="#3c9aec" stroke-width="0.4" /><path d="M576.8 48.6H573V46L568.9 50.4L573 54.8V52.2H576.8" fill="#1d1d1c" stroke="#3c9aec" stroke-width="0.7" /><path d="M594.2 48.3V44.2H611V48.3M594.2 52.5V56.5H611V52.5M594.2 48.3H597.2V52.5H594.2M600 44.2V48.3M605.6 44.2V48.3M600 52.5V56.5M605.6 52.5V56.5" fill="none" stroke="#dcdcdc" stroke-width="0.55" /><rect x="597.40" y="48.50" width="7.00" height="3.80" fill="#1570c8"/><path d="M604.2 48.2L606.6 50.4L604.2 52.6Z" fill="#1570c8" /><path d="M600.8 48.5V52.3" fill="none" stroke="#3c9aec" stroke-width="0.4" /><path d="M605.2 46.6L611.4 54.2M611.4 46.6L605.2 54.2" fill="none" stroke="#d8383a" stroke-width="0.85" /><path d="M619 44.2H635V56.5H619ZM619 48.3H635M619 52.5H635M623.3 44.2V56.5M631.2 44.2V56.5" fill="none" stroke="#dcdcdc" stroke-width="0.55" /><rect x="623.50" y="48.50" width="7.50" height="3.80" fill="#1570c8"/><path d="M622.4 42.8V41.5H631.8V42.8" fill="none" stroke="#2b8fe0" stroke-width="0.7" /><path d="M575.90 74.10L577.50 75.90L579.10 74.10" fill="none" stroke="#e0e0e0" stroke-width="0.9" /><path d="M600.60 74.10L602.20 75.90L603.80 74.10" fill="none" stroke="#e0e0e0" stroke-width="0.9" /><path d="M625.30 74.10L626.90 75.90L628.50 74.10" fill="none" stroke="#e0e0e0" stroke-width="0.9" /><path d="M659.6 43.6V42.6H652.2L656 46.2L652.2 49.8H659.6V48.8" fill="none" stroke="#ffffff" stroke-width="0.8" /><path d="M698.10 45.50L699.70 47.30L701.30 45.50" fill="none" stroke="#e0e0e0" stroke-width="0.9" /><rect x="651.40" y="55.60" width="9.10" height="7.40" fill="none" stroke="#d8d8d8" stroke-width="0.65"/><path d="M651.1 55.6H660.8" fill="none" stroke="#f0f0f0" stroke-width="1.1" /><path d="M655.9 56.8V61.4M654.2 59.8L655.9 61.5L657.6 59.8" fill="none" stroke="#2b8fe0" stroke-width="0.8" /><path d="M673.50 59.05L675.00 60.75L676.50 59.05" fill="none" stroke="#e8e8e8" stroke-width="0.9" /><path d="M656.6 69.2L660.2 72.2L655.4 77.2L651.6 74Z" fill="none" stroke="#e6b8ea" stroke-width="0.7" /><path d="M653.8 71.9L657.6 75L655.4 77.2L651.6 74Z" fill="#c040c8" stroke="#c040c8" stroke-width="0.7" /><path d="M680.30 72.65L681.80 74.35L683.30 72.65" fill="none" stroke="#e0e0e0" stroke-width="0.9" /><text x="708.4" y="49.8" font-size="8.6" fill="#2b8fe0" text-anchor="start" font-family="Liberation Sans, sans-serif" >A</text><text x="708.8" y="58" font-size="8.6" fill="#e8e8e8" text-anchor="start" font-family="Liberation Sans, sans-serif" >Z</text><path d="M716.6 46.6H726.4L722.5 51V56.4H720.5V51Z" fill="none" stroke="#e8e8e8" stroke-width="0.75" /><path d="M723.70 74.70L725.30 76.50L726.90 74.70" fill="none" stroke="#e0e0e0" stroke-width="0.9" /><path d="M751.10 74.70L752.70 76.50L754.30 74.70" fill="none" stroke="#e0e0e0" stroke-width="0.9" /><circle cx="745.20" cy="48.80" r="6.60" fill="none" stroke="#e8e8e8" stroke-width="0.8"/><path d="M740.4 53.6L734.8 58.8" fill="none" stroke="#e8e8e8" stroke-width="0.9" /><path d="M790.00 91.30L792.00 89.10L794.00 91.30" fill="none" stroke="#e0e0e0" stroke-width="0.9" /><path d="M54.70 106.45H59.30L57.00 108.75Z" fill="#e8e8e8" /><rect x="71.20" y="104.95" width="1.10" height="1.10" fill="#ffffff"/><rect x="71.20" y="107.45" width="1.10" height="1.10" fill="#ffffff"/><rect x="71.20" y="109.95" width="1.10" height="1.10" fill="#ffffff"/><path d="M88.5 104.9L94.5 110.7M94.5 104.9L88.5 110.7" fill="none" stroke="#8a8a8a" stroke-width="0.9" /><path d="M108.8 108L111.5 110.7L116.4 104.9" fill="none" stroke="#8a8a8a" stroke-width="0.9" /><path d="M790.30 106.70L792.20 108.70L794.10 106.70" fill="none" stroke="#f0f0f0" stroke-width="1.0" /><rect x="34.60" y="411.60" width="6.80" height="7.00" fill="none" stroke="#d8d8d8" stroke-width="0.7"/><path d="M34.6 413.6H41.4M36.8 413.6V418.6" fill="none" stroke="#d8d8d8" stroke-width="0.6" /><circle cx="39.80" cy="416.80" r="1.30" fill="#323130" stroke="#d8d8d8" stroke-width="0.6"/><path d="M632.20 411.60V418.30M634.67 411.60V418.30M637.13 411.60V418.30M639.60 411.60V418.30M632.20 411.60H639.60M632.20 413.83H639.60M632.20 416.07H639.60M632.20 418.30H639.60" fill="none" stroke="#ffffff" stroke-width="0.95" /><rect x="655.40" y="411.50" width="8.20" height="6.80" fill="none" stroke="#ffffff" stroke-width="0.95"/><rect x="657.60" y="413.00" width="3.80" height="5.30" fill="#8a8a8a" stroke="#ffffff" stroke-width="0.7"/><rect x="679.40" y="411.50" width="7.60" height="6.70" fill="none" stroke="#ffffff" stroke-width="0.9"/><path d="M679.4 415H684.8M681.7 411.5V415M683.9 411.5V415" fill="none" stroke="#ffffff" stroke-width="0.8" /><defs><linearGradient id="gw" x1="0" y1="0" x2="1" y2="1"><stop offset="0" stop-color="#36b5f5"/><stop offset="1" stop-color="#0a6fd0"/></linearGradient><linearGradient id="ge" x1="0" y1="0" x2="1" y2="1"><stop offset="0" stop-color="#1fa8e8"/><stop offset="1" stop-color="#0c54a8"/></linearGradient></defs><rect x="316.00" y="429.00" width="6.70" height="6.70" fill="url(#gw)" rx="0.5"/><rect x="323.30" y="429.00" width="6.70" height="6.70" fill="url(#gw)" rx="0.5"/><rect x="316.00" y="436.30" width="6.70" height="6.70" fill="url(#gw)" rx="0.5"/><rect x="323.30" y="436.30" width="6.70" height="6.70" fill="url(#gw)" rx="0.5"/><linearGradient id="ge2" x1="0" y1="0" x2="0" y2="1"><stop offset="0" stop-color="#2ab2ea"/><stop offset="0.55" stop-color="#0d68c6"/><stop offset="1" stop-color="#0a3e92"/></linearGradient><linearGradient id="ge3" x1="0" y1="0" x2="1" y2="0.3"><stop offset="0" stop-color="#25aee2"/><stop offset="0.55" stop-color="#2fc59a"/><stop offset="1" stop-color="#55dc58"/></linearGradient><circle cx="349.05" cy="435.85" r="7.10" fill="url(#ge2)"/><path d="M343.4 431.4C346 427.6 353.6 427.6 355.8 432.6C356.8 435 356.2 437.4 354.6 438.4H350.6C352 436.8 351.2 434.4 349 434C346.8 433.6 344.4 434.8 343.6 437.2C342.6 435.4 342.6 433 343.4 431.4Z" fill="url(#ge3)" /><circle cx="349.10" cy="436.30" r="1.75" fill="#f3f3f3"/><path d="M349.4 437.9C351.4 439.6 354.2 439.5 356.1 438.3C355.9 439.1 355.6 439.8 355.2 440.4C353 441.2 350.4 440.4 348.4 437.6Z" fill="#f3f3f3" /><path d="M367.8 430.4C367.8 429.8 368.2 429.4 368.8 429.4H372.6L374 430.8H381.2C381.8 430.8 382.2 431.2 382.2 431.8V433H367.8Z" fill="#e8a200" /><rect x="367.80" y="431.60" width="14.40" height="10.30" fill="#ffd04a" rx="0.8"/><rect x="370.00" y="437.20" width="10.00" height="4.70" fill="#1c7cd6" rx="0.8"/><path d="M396.8 432.6V430.6C396.8 429.4 397.6 428.9 398.6 428.9H402C403 428.9 403.8 429.4 403.8 430.6V432.6" fill="none" stroke="#3ab0f0" stroke-width="1" /><rect x="393.60" y="431.80" width="13.40" height="11.20" fill="#123f86" rx="1.6"/><rect x="397.60" y="434.40" width="2.30" height="2.30" fill="#f25022"/><rect x="400.70" y="434.40" width="2.30" height="2.30" fill="#7fba00"/><rect x="397.60" y="437.50" width="2.30" height="2.30" fill="#00a4ef"/><rect x="400.70" y="437.50" width="2.30" height="2.30" fill="#ffb900"/><rect x="419.00" y="429.00" width="14.50" height="13.90" fill="#23a6d8"/><path d="M424.4 431.2L422 440.8H424.6L426.4 431.2Z" fill="#0c2a66" /><path d="M424.6 431.2H426.8V438.8H431.2V440.8H424.6Z" fill="#ffffff" /><circle cx="452.20" cy="435.60" r="6.90" fill="#e8453c"/><path d="M452.2 435.6L446.2 432.2A6.9 6.9 0 0 0 451 442.4Z" fill="#34a853" /><path d="M452.2 435.6L451 442.4A6.9 6.9 0 0 0 458.6 433Z" fill="#fbbc05" /><path d="M452.2 435.6L446.2 432.2A6.9 6.9 0 0 1 458.6 433Z" fill="#ea4335" /><circle cx="452.20" cy="435.60" r="3.20" fill="#ffffff"/><circle cx="452.20" cy="435.60" r="2.50" fill="#4285f4"/><rect x="474.40" y="429.40" width="10.60" height="12.80" fill="#21a366" rx="1"/><rect x="474.40" y="429.40" width="5.30" height="6.40" fill="#107c41"/><rect x="479.70" y="429.40" width="5.30" height="6.40" fill="#33c481" rx="0.6"/><rect x="474.40" y="435.80" width="5.30" height="6.40" fill="#185c37"/><rect x="479.70" y="435.80" width="5.30" height="3.20" fill="#21a366"/><rect x="479.70" y="439.00" width="5.30" height="3.20" fill="#107c41" rx="0.6"/><rect x="470.60" y="432.20" width="7.20" height="7.40" fill="#0f6f3a" rx="0.8"/><path d="M472.7 433.9L475.7 437.9M475.7 433.9L472.7 437.9" fill="none" stroke="#ffffff" stroke-width="0.9" /><path d="M658 437.2L661.3 433.7L664.6 437.2" fill="none" stroke="#1a1a1a" stroke-width="0.9" /><path d="M699 434.4C701.4 431.8 705.2 431.8 707.6 434.4M700.6 435.9C702.2 434.2 704.4 434.2 706 435.9M702 437.3C702.8 436.5 703.8 436.5 704.6 437.3" fill="none" stroke="#1a1a1a" stroke-width="0.7" /><circle cx="703.30" cy="438.40" r="0.50" fill="#1a1a1a"/><path d="M713 434.4H714.6L716.8 432.6V438.6L714.6 436.8H713Z" fill="none" stroke="#1a1a1a" stroke-width="0.7" /><path d="M718.6 434L721.8 437.2M721.8 434L718.6 437.2" fill="none" stroke="#1a1a1a" stroke-width="0.65" /><rect x="728.00" y="433.00" width="7.40" height="5.00" fill="none" stroke="#1a1a1a" stroke-width="0.75" rx="0.9"/><path d="M736 434.6V436.4" fill="none" stroke="#1a1a1a" stroke-width="0.9" /><path d="M729.6 432.6L727.6 435.4H729.4L728.6 437.8" fill="none" stroke="#1a1a1a" stroke-width="0.7" /><rect x="729.40" y="434.20" width="1.80" height="2.60" fill="#1a1a1a"/></svg>
<div class="g">
<span class="t" id="t0" style="left:160.00px;top:7px;font-size:7.1px;color:#ffffff;letter-spacing:-0.191px;">Warehouse1  -  Excel</span>
<span class="t" id="t1" style="left:326.00px;top:8px;font-size:6.9px;color:#ffffff;letter-spacing:-0.141px;">Search</span>
<span class="t" id="t2" style="left:599.50px;top:8px;font-size:6.9px;color:#ffffff;letter-spacing:-0.007px;">Settasub Limrungsan</span>
<span class="t" id="t3" style="left:674.50px;top:9px;font-size:5.6px;color:#f3dca8;letter-spacing:0.078px;">SL</span>
<span class="t" id="t4" style="left:9.50px;top:26px;font-size:7.5px;color:#f2f2f2;letter-spacing:-0.086px;">File</span>
<span class="t" id="t5" style="left:40.00px;top:26px;font-size:7.5px;color:#f2f2f2;font-weight:700;letter-spacing:0.102px;">Home</span>
<span class="t" id="t6" style="left:77.50px;top:26px;font-size:7.5px;color:#f2f2f2;letter-spacing:0.122px;">Insert</span>
<span class="t" id="t7" style="left:114.50px;top:26px;font-size:7.5px;color:#f2f2f2;letter-spacing:-0.034px;">Page Layout</span>
<span class="t" id="t8" style="left:173.75px;top:26px;font-size:7.5px;color:#f2f2f2;letter-spacing:-0.002px;">Formulas</span>
<span class="t" id="t9" style="left:222.00px;top:26px;font-size:7.5px;color:#f2f2f2;letter-spacing:-0.086px;">Data</span>
<span class="t" id="t10" style="left:254.50px;top:26px;font-size:7.5px;color:#f2f2f2;letter-spacing:-0.182px;">Review</span>
<span class="t" id="t11" style="left:294.50px;top:26px;font-size:7.5px;color:#f2f2f2;letter-spacing:-0.156px;">View</span>
<span class="t" id="t12" style="left:326.25px;top:26px;font-size:7.5px;color:#f2f2f2;letter-spacing:0.174px;">Developer</span>
<span class="t" id="t13" style="left:378.00px;top:26px;font-size:7.5px;color:#f2f2f2;letter-spacing:0.078px;">Help</span>
<span class="t" id="t14" style="left:411.25px;top:26px;font-size:7.5px;color:#f2f2f2;letter-spacing:-0.565px;">ACROBAT</span>
<span class="t" id="t15" style="left:461.25px;top:26px;font-size:7.5px;color:#f2f2f2;letter-spacing:-0.003px;">Power Pivot</span>
<span class="t" id="t16" style="left:518.75px;top:26px;font-size:7.5px;color:#f2f2f2;letter-spacing:0.065px;">New Tab</span>
<span class="t" id="t17" style="left:767.00px;top:26px;font-size:7.3px;color:#ffffff;letter-spacing:0.103px;">Share</span>
<span class="t" id="t18" style="left:8.75px;top:88px;font-size:6.6px;color:#e6e6e6;letter-spacing:0.113px;">Clipboard</span>
<span class="t" id="t19" style="left:112.00px;top:88px;font-size:6.6px;color:#e6e6e6;letter-spacing:0.199px;">Font</span>
<span class="t" id="t20" style="left:253.75px;top:88px;font-size:6.6px;color:#e6e6e6;letter-spacing:0.158px;">Alignment</span>
<span class="t" id="t21" style="left:384.00px;top:88px;font-size:6.6px;color:#e6e6e6;letter-spacing:0.258px;">Number</span>
<span class="t" id="t22" style="left:495.75px;top:88px;font-size:6.6px;color:#e6e6e6;letter-spacing:-0.286px;">Styles</span>
<span class="t" id="t23" style="left:596.00px;top:88px;font-size:6.6px;color:#e6e6e6;letter-spacing:-0.331px;">Cells</span>
<span class="t" id="t24" style="left:693.00px;top:88px;font-size:6.6px;color:#e6e6e6;letter-spacing:0.083px;">Editing</span>
<span class="t" id="t25" style="left:9.00px;top:63px;font-size:7.3px;color:#ffffff;letter-spacing:-0.534px;">Paste</span>
<span class="t" id="t26" style="left:63.00px;top:50px;font-size:6.9px;color:#ffffff;letter-spacing:-0.076px;">Calibri</span>
<span class="t" id="t27" style="left:136.30px;top:50px;font-size:6.9px;color:#ffffff;letter-spacing:-0.478px;">11</span>
<span class="t" id="t28" style="left:65.20px;top:66px;font-size:8px;color:#ffffff;font-weight:700;letter-spacing:-0.900px;">B</span>
<span class="t" id="t29" style="left:79.60px;top:66px;font-size:8.4px;color:#ffffff;font-style:italic;font-family:'Liberation Serif',serif;letter-spacing:0.203px;">I</span>
<span class="t" id="t30" style="left:92.80px;top:66px;font-size:7.6px;color:#ffffff;text-decoration:underline;letter-spacing:-0.884px;">U</span>
<span class="t" id="t31" style="left:163.00px;top:47px;font-size:10px;color:#ffffff;letter-spacing:-0.272px;">A</span>
<span class="t" id="t32" style="left:177.75px;top:47px;font-size:8.6px;color:#ffffff;letter-spacing:0.016px;">A</span>
<span class="t" id="t33" style="left:169.40px;top:64px;font-size:8.4px;color:#ffffff;letter-spacing:0.606px;">A</span>
<span class="t" id="t34" style="left:288.50px;top:48px;font-size:7.3px;color:#ffffff;letter-spacing:-0.288px;">Wrap Text</span>
<span class="t" id="t35" style="left:288.50px;top:67px;font-size:7.3px;color:#ffffff;letter-spacing:-0.144px;">Merge &amp; Center</span>
<span class="t" id="t36" style="left:362.80px;top:50px;font-size:6.9px;color:#ffffff;letter-spacing:-0.245px;">General</span>
<span class="t" id="t37" style="left:385.60px;top:67px;font-size:10.4px;color:#f0f0f0;letter-spacing:-0.050px;">%</span>
<span class="t" id="t38" style="left:455.50px;top:63px;font-size:7.3px;color:#ffffff;letter-spacing:-0.001px;">Conditional</span>
<span class="t" id="t39" style="left:453.75px;top:72px;font-size:7.3px;color:#ffffff;letter-spacing:-0.212px;">Formatting</span>
<span class="t" id="t40" style="left:497.50px;top:63px;font-size:7.3px;color:#ffffff;letter-spacing:-0.260px;">Format as</span>
<span class="t" id="t41" style="left:502.00px;top:72px;font-size:7.3px;color:#ffffff;letter-spacing:-0.491px;">Table</span>
<span class="t" id="t42" style="left:537.50px;top:63px;font-size:7.3px;color:#ffffff;letter-spacing:-0.270px;">Cell</span>
<span class="t" id="t43" style="left:530.50px;top:72px;font-size:7.3px;color:#ffffff;letter-spacing:-0.562px;">Styles</span>
<span class="t" id="t44" style="left:570.00px;top:63px;font-size:7.3px;color:#ffffff;letter-spacing:-0.375px;">Insert</span>
<span class="t" id="t45" style="left:592.50px;top:63px;font-size:7.3px;color:#ffffff;letter-spacing:-0.182px;">Delete</span>
<span class="t" id="t46" style="left:616.50px;top:63px;font-size:7.3px;color:#ffffff;letter-spacing:-0.185px;">Format</span>
<span class="t" id="t47" style="left:662.50px;top:43px;font-size:7.3px;color:#ffffff;letter-spacing:-0.217px;">AutoSum</span>
<span class="t" id="t48" style="left:662.50px;top:56px;font-size:7.3px;color:#ffffff;letter-spacing:-0.082px;">Fill</span>
<span class="t" id="t49" style="left:662.50px;top:70px;font-size:7.3px;color:#ffffff;letter-spacing:-0.188px;">Clear</span>
<span class="t" id="t50" style="left:707.50px;top:63px;font-size:7.3px;color:#ffffff;letter-spacing:-0.130px;">Sort &amp;</span>
<span class="t" id="t51" style="left:706.00px;top:72px;font-size:7.3px;color:#ffffff;letter-spacing:-0.286px;">Filter</span>
<span class="t" id="t52" style="left:732.50px;top:63px;font-size:7.3px;color:#ffffff;letter-spacing:-0.099px;">Find &amp;</span>
<span class="t" id="t53" style="left:730.75px;top:72px;font-size:7.3px;color:#ffffff;letter-spacing:-0.505px;">Select</span>
<span class="t" id="t54" style="left:7.00px;top:105px;font-size:7.4px;color:#ffffff;letter-spacing:0.203px;">M13</span>
<span class="t" id="t55" style="left:132.70px;transform:translateX(-50%);top:104px;font-size:8.8px;color:#ffffff;font-weight:700;font-style:italic;font-family:'Liberation Serif',serif;">f</span>
<span class="t" id="t56" style="left:136.10px;transform:translateX(-50%);top:109px;font-size:5.6px;color:#ffffff;font-weight:700;font-style:italic;font-family:'Liberation Serif',serif;">x</span>
<span class="t" id="t57" style="left:33.75px;transform:translateX(-50%);top:124px;font-size:7.2px;color:#c8c8c8;">A</span>
<span class="t" id="t58" style="left:76.12px;transform:translateX(-50%);top:124px;font-size:7.2px;color:#c8c8c8;">B</span>
<span class="t" id="t59" style="left:121.25px;transform:translateX(-50%);top:124px;font-size:7.2px;color:#c8c8c8;">C</span>
<span class="t" id="t60" style="left:161.82px;transform:translateX(-50%);top:124px;font-size:7.2px;color:#c8c8c8;">D</span>
<span class="t" id="t61" style="left:201.20px;transform:translateX(-50%);top:124px;font-size:7.2px;color:#c8c8c8;">E</span>
<span class="t" id="t62" style="left:240.00px;transform:translateX(-50%);top:124px;font-size:7.2px;color:#c8c8c8;">F</span>
<span class="t" id="t63" style="left:281.00px;transform:translateX(-50%);top:124px;font-size:7.2px;color:#c8c8c8;">G</span>
<span class="t" id="t64" style="left:321.88px;transform:translateX(-50%);top:124px;font-size:7.2px;color:#c8c8c8;">H</span>
<span class="t" id="t65" style="left:359.32px;transform:translateX(-50%);top:124px;font-size:7.2px;color:#c8c8c8;">I</span>
<span class="t" id="t66" style="left:396.95px;transform:translateX(-50%);top:124px;font-size:7.2px;color:#c8c8c8;">J</span>
<span class="t" id="t67" style="left:434.24px;transform:translateX(-50%);top:124px;font-size:7.2px;color:#c8c8c8;">K</span>
<span class="t" id="t68" style="left:471.72px;transform:translateX(-50%);top:124px;font-size:7.2px;color:#c8c8c8;">L</span>
<span class="t" id="t69" style="left:509.20px;transform:translateX(-50%);top:124px;font-size:7.2px;color:#ffffff;">M</span>
<span class="t" id="t70" style="left:546.69px;transform:translateX(-50%);top:124px;font-size:7.2px;color:#c8c8c8;">N</span>
<span class="t" id="t71" style="left:584.17px;transform:translateX(-50%);top:124px;font-size:7.2px;color:#c8c8c8;">O</span>
<span class="t" id="t72" style="left:621.65px;transform:translateX(-50%);top:124px;font-size:7.2px;color:#c8c8c8;">P</span>
<span class="t" id="t73" style="left:659.13px;transform:translateX(-50%);top:124px;font-size:7.2px;color:#c8c8c8;">Q</span>
<span class="t" id="t74" style="left:696.61px;transform:translateX(-50%);top:124px;font-size:7.2px;color:#c8c8c8;">R</span>
<span class="t" id="t75" style="left:734.09px;transform:translateX(-50%);top:124px;font-size:7.2px;color:#c8c8c8;">S</span>
<span class="t" id="t76" style="left:771.00px;transform:translateX(-50%);top:124px;font-size:7.2px;color:#c8c8c8;">T</span>
<span class="t" id="t77" style="left:7.90px;transform:translateX(-50%);top:136px;font-size:7.8px;color:#d0d0d0;">1</span>
<span class="t" id="t78" style="left:7.90px;transform:translateX(-50%);top:147px;font-size:7.8px;color:#d0d0d0;">2</span>
<span class="t" id="t79" style="left:7.90px;transform:translateX(-50%);top:159px;font-size:7.8px;color:#d0d0d0;">3</span>
<span class="t" id="t80" style="left:7.90px;transform:translateX(-50%);top:171px;font-size:7.8px;color:#d0d0d0;">4</span>
<span class="t" id="t81" style="left:7.90px;transform:translateX(-50%);top:183px;font-size:7.8px;color:#d0d0d0;">5</span>
<span class="t" id="t82" style="left:7.90px;transform:translateX(-50%);top:194px;font-size:7.8px;color:#d0d0d0;">6</span>
<span class="t" id="t83" style="left:7.90px;transform:translateX(-50%);top:206px;font-size:7.8px;color:#d0d0d0;">7</span>
<span class="t" id="t84" style="left:7.90px;transform:translateX(-50%);top:218px;font-size:7.8px;color:#d0d0d0;">8</span>
<span class="t" id="t85" style="left:7.90px;transform:translateX(-50%);top:229px;font-size:7.8px;color:#d0d0d0;">9</span>
<span class="t" id="t86" style="left:8.10px;transform:translateX(-50%);top:241px;font-size:7.8px;color:#d0d0d0;">10</span>
<span class="t" id="t87" style="left:8.10px;transform:translateX(-50%);top:253px;font-size:7.8px;color:#d0d0d0;">11</span>
<span class="t" id="t88" style="left:8.10px;transform:translateX(-50%);top:265px;font-size:7.8px;color:#d0d0d0;">12</span>
<span class="t" id="t89" style="left:8.10px;transform:translateX(-50%);top:276px;font-size:7.8px;color:#ffffff;">13</span>
<span class="t" id="t90" style="left:8.10px;transform:translateX(-50%);top:288px;font-size:7.8px;color:#d0d0d0;">14</span>
<span class="t" id="t91" style="left:8.10px;transform:translateX(-50%);top:300px;font-size:7.8px;color:#d0d0d0;">15</span>
<span class="t" id="t92" style="left:8.10px;transform:translateX(-50%);top:311px;font-size:7.8px;color:#d0d0d0;">16</span>
<span class="t" id="t93" style="left:8.10px;transform:translateX(-50%);top:323px;font-size:7.8px;color:#d0d0d0;">17</span>
<span class="t" id="t94" style="left:8.10px;transform:translateX(-50%);top:335px;font-size:7.8px;color:#d0d0d0;">18</span>
<span class="t" id="t95" style="left:8.10px;transform:translateX(-50%);top:347px;font-size:7.8px;color:#d0d0d0;">19</span>
<span class="t" id="t96" style="left:8.10px;transform:translateX(-50%);top:358px;font-size:7.8px;color:#d0d0d0;">20</span>
<span class="t" id="t97" style="left:8.10px;transform:translateX(-50%);top:370px;font-size:7.8px;color:#d0d0d0;">21</span>
<span class="t" id="t98" style="left:8.10px;transform:translateX(-50%);top:382px;font-size:7.8px;color:#d0d0d0;">22</span>
<span class="t" id="t197" style="left:66.50px;top:398px;font-size:7.6px;color:#ffffff;letter-spacing:-0.082px;">Overview</span>
<span class="t" id="t198" style="left:114.50px;top:398px;font-size:7.6px;color:#3d2b00;letter-spacing:0.055px;">items-list</span>
<span class="t" id="t199" style="left:162.50px;top:398px;font-size:7.6px;color:#1a2e08;letter-spacing:-0.037px;">Transection</span>
<span class="t" id="t200" style="left:217.50px;top:398px;font-size:7.6px;color:#1e7a45;font-weight:700;letter-spacing:-0.281px;">Check-h</span>
<span class="t" id="t201" style="left:260.50px;top:398px;font-size:7.6px;color:#ffffff;letter-spacing:-0.100px;">Stock</span>
<span class="t" id="t202" style="left:4.80px;top:414px;font-size:6.7px;color:#ffffff;letter-spacing:-0.269px;">Ready</span>
<span class="t" id="t203" style="left:780.20px;top:414px;font-size:6.8px;color:#ffffff;letter-spacing:-0.598px;">100%</span>
<span class="t" id="t204" style="left:700.00px;transform:translateX(-50%);top:413px;font-size:8px;color:#d0d0d0;">−</span>
<span class="t" id="t205" style="left:769.50px;transform:translateX(-50%);top:412px;font-size:8.6px;color:#d0d0d0;">+</span>
<span class="t" id="t206" style="left:628.75px;top:380px;font-size:11.57px;color:rgba(165,165,165,0.72);">Activate Windows</span>
<span class="t" id="t207" style="left:628.75px;top:393px;font-size:8.64px;color:rgba(165,165,165,0.75);">Go to Settings to activate Windows.</span>
<span class="t" id="t208" style="left:759.70px;top:430px;font-size:6.6px;color:#1a1a1a;letter-spacing:-0.403px;">17:10</span>
<span class="t" id="t209" style="left:746.00px;top:439px;font-size:6.6px;color:#1a1a1a;letter-spacing:0.316px;">7/9/2565</span>
<span class="t" id="t210" style="left:784.00px;transform:translateX(-50%);top:435px;font-size:5.6px;color:#ffffff;">1</span>
<span class="t" id="t211" style="left:676.50px;top:436px;font-size:5.72px;color:#1a1a1a;">ไทย</span>
</div>
<span class="t" id="t99" style="left:101.35px;top:148px;font-size:7.9px;color:#000000;">ประเภท</span>
<span class="t" id="t100" style="left:144.35px;top:148px;font-size:8px;color:#000000;letter-spacing:-0.200px;">IN</span>
<span class="t" id="t101" style="left:223.10px;top:148px;font-size:7.7px;color:#000000;">ช่วงเวลา</span>
<span class="t" id="t102" style="left:265.75px;top:148px;font-size:8px;color:#000000;letter-spacing:-0.080px;">6/9/2022</span>
<span class="t" id="t103" style="left:305.10px;top:148px;font-size:7.58px;color:#000000;">จาก</span>
<span class="t" id="t104" style="left:417.10px;top:148px;font-size:8px;color:#000000;letter-spacing:-0.200px;">IN</span>
<span class="t" id="t105" style="left:417.10px;top:159px;font-size:8px;color:#000000;letter-spacing:-0.630px;">OUT</span>
<span class="t" id="t106" style="left:417.10px;top:171px;font-size:8px;color:#000000;letter-spacing:-0.684px;">BOTH</span>
<span class="t" id="t107" style="left:16.60px;top:171px;font-size:8px;color:#000000;letter-spacing:-0.172px;">Row</span>
<span class="t" id="t108" style="left:54.10px;top:171px;font-size:8px;color:#000000;letter-spacing:-0.227px;">Date</span>
<span class="t" id="t109" style="left:101.35px;top:171px;font-size:8px;color:#000000;letter-spacing:-0.500px;">ID</span>
<span class="t" id="t110" style="left:144.35px;top:171px;font-size:8px;color:#000000;letter-spacing:-0.011px;">Product</span>
<span class="t" id="t111" style="left:182.50px;top:171px;font-size:8px;color:#000000;letter-spacing:-0.211px;">Type</span>
<span class="t" id="t112" style="left:223.10px;top:171px;font-size:8px;color:#000000;letter-spacing:0.053px;">Units</span>
<span class="t" id="t113" style="left:47.10px;top:183px;font-size:8px;color:#000000;letter-spacing:-0.653px;">2</span>
<span class="t" id="t114" style="left:67.65px;top:183px;font-size:8px;color:#000000;letter-spacing:-0.080px;">6/9/2022</span>
<span class="t" id="t115" style="left:101.35px;top:183px;font-size:8px;color:#000000;letter-spacing:-0.301px;">M000001</span>
<span class="t" id="t116" style="left:144.35px;top:183px;font-size:8px;color:#000000;letter-spacing:-0.184px;">Book</span>
<span class="t" id="t117" style="left:182.50px;top:183px;font-size:8px;color:#000000;letter-spacing:0.131px;">stationery</span>
<span class="t" id="t118" style="left:233.90px;top:183px;font-size:8px;color:#000000;letter-spacing:-0.245px;">400.00</span>
<span class="t" id="t119" style="left:47.10px;top:194px;font-size:8px;color:#000000;letter-spacing:-0.653px;">3</span>
<span class="t" id="t120" style="left:67.65px;top:194px;font-size:8px;color:#000000;letter-spacing:-0.080px;">6/9/2022</span>
<span class="t" id="t121" style="left:101.35px;top:194px;font-size:8px;color:#000000;letter-spacing:-0.301px;">M000002</span>
<span class="t" id="t122" style="left:144.35px;top:194px;font-size:8px;color:#000000;letter-spacing:0.156px;">Notebook</span>
<span class="t" id="t123" style="left:182.50px;top:194px;font-size:8px;color:#000000;letter-spacing:0.131px;">stationery</span>
<span class="t" id="t124" style="left:229.90px;top:194px;font-size:8px;color:#000000;letter-spacing:-0.275px;">1000.00</span>
<span class="t" id="t125" style="left:47.10px;top:206px;font-size:8px;color:#000000;letter-spacing:-0.653px;">4</span>
<span class="t" id="t126" style="left:67.65px;top:206px;font-size:8px;color:#000000;letter-spacing:-0.080px;">6/9/2022</span>
<span class="t" id="t127" style="left:101.35px;top:206px;font-size:8px;color:#000000;letter-spacing:-0.301px;">M000003</span>
<span class="t" id="t128" style="left:144.35px;top:206px;font-size:8px;color:#000000;letter-spacing:-0.286px;">pen</span>
<span class="t" id="t129" style="left:182.50px;top:206px;font-size:8px;color:#000000;letter-spacing:0.131px;">stationery</span>
<span class="t" id="t130" style="left:233.90px;top:206px;font-size:8px;color:#000000;letter-spacing:-0.245px;">250.00</span>
<span class="t" id="t131" style="left:47.10px;top:218px;font-size:8px;color:#000000;letter-spacing:-0.653px;">5</span>
<span class="t" id="t132" style="left:67.65px;top:218px;font-size:8px;color:#000000;letter-spacing:-0.080px;">6/9/2022</span>
<span class="t" id="t133" style="left:101.35px;top:218px;font-size:8px;color:#000000;letter-spacing:-0.301px;">M000004</span>
<span class="t" id="t134" style="left:144.35px;top:218px;font-size:8px;color:#000000;letter-spacing:0.016px;">pencil</span>
<span class="t" id="t135" style="left:182.50px;top:218px;font-size:8px;color:#000000;letter-spacing:0.131px;">stationery</span>
<span class="t" id="t136" style="left:233.90px;top:218px;font-size:8px;color:#000000;letter-spacing:-0.245px;">454.00</span>
<span class="t" id="t137" style="left:47.10px;top:230px;font-size:8px;color:#000000;letter-spacing:-0.653px;">6</span>
<span class="t" id="t138" style="left:67.65px;top:230px;font-size:8px;color:#000000;letter-spacing:-0.080px;">6/9/2022</span>
<span class="t" id="t139" style="left:101.35px;top:230px;font-size:8px;color:#000000;letter-spacing:-0.301px;">M000005</span>
<span class="t" id="t140" style="left:144.35px;top:230px;font-size:8px;color:#000000;letter-spacing:0.097px;">ruler</span>
<span class="t" id="t141" style="left:182.50px;top:230px;font-size:8px;color:#000000;letter-spacing:0.131px;">stationery</span>
<span class="t" id="t142" style="left:233.90px;top:230px;font-size:8px;color:#000000;letter-spacing:-0.245px;">587.00</span>
<span class="t" id="t143" style="left:21.25px;top:241px;font-size:8px;color:#000000;letter-spacing:0.022px;">#NUM!</span>
<span class="t" id="t144" style="left:65.88px;top:241px;font-size:8px;color:#000000;letter-spacing:-0.881px;">FALSE</span>
<span class="t" id="t145" style="left:111.00px;top:241px;font-size:8px;color:#000000;letter-spacing:-0.881px;">FALSE</span>
<span class="t" id="t146" style="left:151.57px;top:241px;font-size:8px;color:#000000;letter-spacing:-0.881px;">FALSE</span>
<span class="t" id="t147" style="left:190.95px;top:241px;font-size:8px;color:#000000;letter-spacing:-0.881px;">FALSE</span>
<span class="t" id="t148" style="left:229.75px;top:241px;font-size:8px;color:#000000;letter-spacing:-0.881px;">FALSE</span>
<span class="t" id="t149" style="left:21.25px;top:253px;font-size:8px;color:#000000;letter-spacing:0.022px;">#NUM!</span>
<span class="t" id="t150" style="left:65.88px;top:253px;font-size:8px;color:#000000;letter-spacing:-0.881px;">FALSE</span>
<span class="t" id="t151" style="left:111.00px;top:253px;font-size:8px;color:#000000;letter-spacing:-0.881px;">FALSE</span>
<span class="t" id="t152" style="left:151.57px;top:253px;font-size:8px;color:#000000;letter-spacing:-0.881px;">FALSE</span>
<span class="t" id="t153" style="left:190.95px;top:253px;font-size:8px;color:#000000;letter-spacing:-0.881px;">FALSE</span>
<span class="t" id="t154" style="left:229.75px;top:253px;font-size:8px;color:#000000;letter-spacing:-0.881px;">FALSE</span>
<span class="t" id="t155" style="left:21.25px;top:265px;font-size:8px;color:#000000;letter-spacing:0.022px;">#NUM!</span>
<span class="t" id="t156" style="left:65.88px;top:265px;font-size:8px;color:#000000;letter-spacing:-0.881px;">FALSE</span>
<span class="t" id="t157" style="left:111.00px;top:265px;font-size:8px;color:#000000;letter-spacing:-0.881px;">FALSE</span>
<span class="t" id="t158" style="left:151.57px;top:265px;font-size:8px;color:#000000;letter-spacing:-0.881px;">FALSE</span>
<span class="t" id="t159" style="left:190.95px;top:265px;font-size:8px;color:#000000;letter-spacing:-0.881px;">FALSE</span>
<span class="t" id="t160" style="left:229.75px;top:265px;font-size:8px;color:#000000;letter-spacing:-0.881px;">FALSE</span>
<span class="t" id="t161" style="left:21.25px;top:276px;font-size:8px;color:#000000;letter-spacing:0.022px;">#NUM!</span>
<span class="t" id="t162" style="left:65.88px;top:276px;font-size:8px;color:#000000;letter-spacing:-0.881px;">FALSE</span>
<span class="t" id="t163" style="left:111.00px;top:276px;font-size:8px;color:#000000;letter-spacing:-0.881px;">FALSE</span>
<span class="t" id="t164" style="left:151.57px;top:276px;font-size:8px;color:#000000;letter-spacing:-0.881px;">FALSE</span>
<span class="t" id="t165" style="left:190.95px;top:276px;font-size:8px;color:#000000;letter-spacing:-0.881px;">FALSE</span>
<span class="t" id="t166" style="left:229.75px;top:276px;font-size:8px;color:#000000;letter-spacing:-0.881px;">FALSE</span>
<span class="t" id="t167" style="left:21.25px;top:288px;font-size:8px;color:#000000;letter-spacing:0.022px;">#NUM!</span>
<span class="t" id="t168" style="left:65.88px;top:288px;font-size:8px;color:#000000;letter-spacing:-0.881px;">FALSE</span>
<span class="t" id="t169" style="left:111.00px;top:288px;font-size:8px;color:#000000;letter-spacing:-0.881px;">FALSE</span>
<span class="t" id="t170" style="left:151.57px;top:288px;font-size:8px;color:#000000;letter-spacing:-0.881px;">FALSE</span>
<span class="t" id="t171" style="left:190.95px;top:288px;font-size:8px;color:#000000;letter-spacing:-0.881px;">FALSE</span>
<span class="t" id="t172" style="left:229.75px;top:288px;font-size:8px;color:#000000;letter-spacing:-0.881px;">FALSE</span>
<span class="t" id="t173" style="left:21.25px;top:300px;font-size:8px;color:#000000;letter-spacing:0.022px;">#NUM!</span>
<span class="t" id="t174" style="left:65.88px;top:300px;font-size:8px;color:#000000;letter-spacing:-0.881px;">FALSE</span>
<span class="t" id="t175" style="left:111.00px;top:300px;font-size:8px;color:#000000;letter-spacing:-0.881px;">FALSE</span>
<span class="t" id="t176" style="left:151.57px;top:300px;font-size:8px;color:#000000;letter-spacing:-0.881px;">FALSE</span>
<span class="t" id="t177" style="left:190.95px;top:300px;font-size:8px;color:#000000;letter-spacing:-0.881px;">FALSE</span>
<span class="t" id="t178" style="left:229.75px;top:300px;font-size:8px;color:#000000;letter-spacing:-0.881px;">FALSE</span>
<span class="t" id="t179" style="left:21.25px;top:312px;font-size:8px;color:#000000;letter-spacing:0.022px;">#NUM!</span>
<span class="t" id="t180" style="left:65.88px;top:312px;font-size:8px;color:#000000;letter-spacing:-0.881px;">FALSE</span>
<span class="t" id="t181" style="left:111.00px;top:312px;font-size:8px;color:#000000;letter-spacing:-0.881px;">FALSE</span>
<span class="t" id="t182" style="left:151.57px;top:312px;font-size:8px;color:#000000;letter-spacing:-0.881px;">FALSE</span>
<span class="t" id="t183" style="left:190.95px;top:312px;font-size:8px;color:#000000;letter-spacing:-0.881px;">FALSE</span>
<span class="t" id="t184" style="left:229.75px;top:312px;font-size:8px;color:#000000;letter-spacing:-0.881px;">FALSE</span>
<span class="t" id="t185" style="left:21.25px;top:323px;font-size:8px;color:#000000;letter-spacing:0.022px;">#NUM!</span>
<span class="t" id="t186" style="left:65.88px;top:323px;font-size:8px;color:#000000;letter-spacing:-0.881px;">FALSE</span>
<span class="t" id="t187" style="left:111.00px;top:323px;font-size:8px;color:#000000;letter-spacing:-0.881px;">FALSE</span>
<span class="t" id="t188" style="left:151.57px;top:323px;font-size:8px;color:#000000;letter-spacing:-0.881px;">FALSE</span>
<span class="t" id="t189" style="left:190.95px;top:323px;font-size:8px;color:#000000;letter-spacing:-0.881px;">FALSE</span>
<span class="t" id="t190" style="left:229.75px;top:323px;font-size:8px;color:#000000;letter-spacing:-0.881px;">FALSE</span>
<span class="t" id="t191" style="left:21.25px;top:335px;font-size:8px;color:#000000;letter-spacing:0.022px;">#NUM!</span>
<span class="t" id="t192" style="left:65.88px;top:335px;font-size:8px;color:#000000;letter-spacing:-0.881px;">FALSE</span>
<span class="t" id="t193" style="left:111.00px;top:335px;font-size:8px;color:#000000;letter-spacing:-0.881px;">FALSE</span>
<span class="t" id="t194" style="left:151.57px;top:335px;font-size:8px;color:#000000;letter-spacing:-0.881px;">FALSE</span>
<span class="t" id="t195" style="left:190.95px;top:335px;font-size:8px;color:#000000;letter-spacing:-0.881px;">FALSE</span>
<span class="t" id="t196" style="left:229.75px;top:335px;font-size:8px;color:#000000;letter-spacing:-0.881px;">FALSE</span>
<svg class="b" style="left:0;top:0" width="800" height="450" viewBox="0 0 800 450">
<rect x="136.60" y="136.85" width="50.30" height="25.30" fill="none" stroke="#ed1c24" stroke-width="3.2"/>
<rect x="256.60" y="137.70" width="51.55" height="23.45" fill="none" stroke="#ed1c24" stroke-width="3.2"/>
<rect x="338.70" y="141.10" width="44.95" height="24.70" fill="none" stroke="#ed1c24" stroke-width="3.2"/>
<rect x="10.65" y="167.25" width="252.70" height="194.60" fill="none" stroke="#ed1c24" stroke-width="3.3"/>
</svg>
</body></html>
